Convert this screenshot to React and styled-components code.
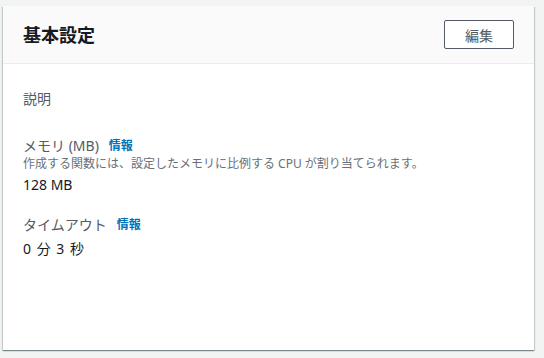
import React from "react";
import styled, { createGlobalStyle } from "styled-components";

const Global = createGlobalStyle`
  html, body { margin: 0; padding: 0; background: #f2f3f3; }
  body { font-family: "Noto Sans", "Noto Sans CJK JP", sans-serif; }
`;

const Page = styled.div`
  padding: 6px 10px 8px 3px;
`;

const Card = styled.section`
  background: #fff;
  height: 344px;
  box-sizing: border-box;
  box-shadow: 0 1px 1px 0 rgba(0, 28, 36, 0.3), 1px 1px 1px 0 rgba(0, 28, 36, 0.15),
    -1px 1px 1px 0 rgba(0, 28, 36, 0.15);
`;

const Header = styled.header`
  display: flex;
  align-items: center;
  justify-content: space-between;
  height: 58px;
  box-sizing: border-box;
  padding: 0 20px;
  background: #fafafa;
  border-bottom: 1px solid #eaeded;
`;

const Title = styled.h2`
  margin: 0;
  font-size: 18px;
  font-weight: 700;
  color: #16191f;
  line-height: 22px;
`;

const Button = styled.button`
  width: 70px;
  height: 29px;
  box-sizing: border-box;
  background: #fff;
  border: 1px solid #545b64;
  border-radius: 2px;
  color: #545b64;
  font-family: inherit;
  font-size: 14px;
  font-weight: 400;
  padding: 0;
`;

const Body = styled.div`
  padding: 25px 20px;
  display: flex;
  flex-direction: column;
`;

const Group = styled.div`
  display: flex;
  flex-direction: column;
  margin-bottom: ${(p) => p.$gap}px;
`;

const Label = styled.div`
  font-size: 14px;
  line-height: 20px;
  color: #545b64;
  display: flex;
  align-items: center;
  gap: 10px;
`;

const Info = styled.a`
  font-size: 12px;
  font-weight: 700;
  color: #0073bb;
  text-decoration: none;
`;

const Desc = styled.div`
  font-size: 12px;
  line-height: 14px;
  margin-top: 1px;
  color: #687078;
`;

const Value = styled.div`
  font-size: 14px;
  line-height: 20px;
  color: #16191f;
  margin-top: ${(p) => p.$top}px;
  word-spacing: ${(p) => p.$spacing || 0}px;
`;

export default function App() {
  return (
    <>
      <Global />
      <Page>
        <Card>
          <Header>
            <Title>基本設定</Title>
            <Button>編集</Button>
          </Header>
          <Body>
            <Group $gap={27}>
              <Label>説明</Label>
            </Group>
            <Group $gap={20}>
              <Label>
                メモリ (MB) <Info href="#">情報</Info>
              </Label>
              <Desc>作成する関数には、設定したメモリに比例する CPU が割り当てられます。</Desc>
              <Value $top={4}>128 MB</Value>
            </Group>
            <Group $gap={0}>
              <Label>
                タイムアウト <Info href="#">情報</Info>
              </Label>
              <Value $top={4} $spacing={2}>0 分 3 秒</Value>
            </Group>
          </Body>
        </Card>
      </Page>
    </>
  );
}
